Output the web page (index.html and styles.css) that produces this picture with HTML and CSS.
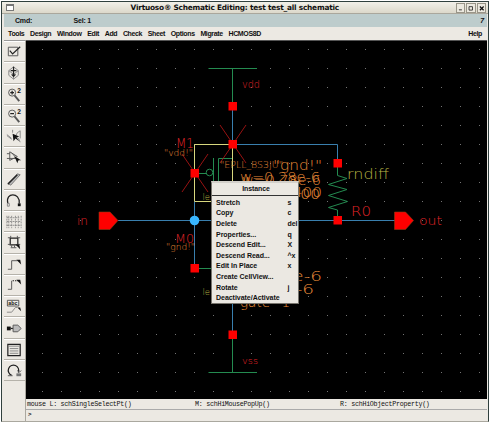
FILE: index.html
```html
<!DOCTYPE html>
<html lang="en">
<head>
<meta charset="utf-8">
<title>Virtuoso Schematic Editing</title>
<link rel="stylesheet" href="styles.css">
</head>
<body>
<div class="window">
  <header class="titlebar">
    <i class="sys"></i>
    <h1>Virtuoso® Schematic Editing: test test_all schematic</h1>
    <div class="controls">
      <svg viewBox="0 0 10 10"><path d="M2.5 7h4v1h-4z"/></svg>
      <svg viewBox="0 0 10 10"><path d="M2.7 3.2h4.6v4.6H2.7z" class="outline"/></svg>
      <svg viewBox="0 0 10 10"><path d="M2.5 3l5 5m0-5l-5 5" class="outline thick"/></svg>
    </div>
  </header>
  <div class="status"><span class="cmd">Cmd:</span><span>Sel: 1</span><span class="count">7</span></div>
  <nav class="menubar">
    <span>Tools</span><span>Design</span><span>Window</span><span>Edit</span><span>Add</span><span>Check</span><span>Sheet</span><span>Options</span><span>Migrate</span><span>HCMOS8D</span><span class="help">Help</span>
  </nav>
  <div class="main">
    <aside class="tools">
      <div><svg viewBox="0 0 22 20"><path d="M4.500 5.500h10v9h-10z"/><path d="M6 9l3 3.500L17 5" class="b"/></svg></div>
      <div><svg viewBox="0 0 22 20"><path d="M5 8l5-4 5 4-5 4zM5 8v5l5 4 5-4V8M10 12v5" class="g"/><path d="M10 4v10M7 8h6M8 12l2 2 2-2" class="b"/></svg></div>
      <div><svg viewBox="0 0 22 20"><circle cx="8.500" cy="8" r="3.700"/><path d="M6.500 8h4m-2-2v4" class="b"/><path d="M11 11l5 6" class="t"/><text x="14" y="8">2</text></svg></div>
      <div><svg viewBox="0 0 22 20"><circle cx="8.500" cy="8" r="3.700"/><path d="M6.500 8h4" class="b"/><path d="M11 11l5 6" class="t"/><text x="14" y="8">2</text></svg></div>
      <div><svg viewBox="0 0 22 20"><path d="M9 3v3M11 12l3-6 3-2v8" class="g"/><path d="M3 8l5 4m3-3l5 4M3 9l5 4M15 12l2 4" class="g"/><path d="M9 7l1 8 2-3 4 3-3-4 3-1z" class="f"/></svg></div>
      <div><svg viewBox="0 0 22 20"><path d="M6 4v9l8-4zM3 6h3m-3 5h12M8 5l7 8"/><path d="M11 9l3 7 1-3 3 0z" class="f"/></svg></div>
      <div><svg viewBox="0 0 22 20"><path d="M4 14l10-10 3 1L7 16z" class="fill thin"/><path d="M4 15L14 5" class="b"/></svg></div>
      <div><svg viewBox="0 0 22 20"><path d="M4 13C1 1 17 1 16 13" class="b"/><path d="M3.500 13h2v3h-2z" class="g"/><path d="M14.500 13h3v3h-3z" class="f"/></svg></div>
      <div><svg viewBox="0 0 22 20"><path d="M3 4v13M5 4v13M8 4v13M12 4v13M15 4v13M18 4v13M3 6h13M3 10h15M3 14h15" class="dash"/></svg></div>
      <div><svg viewBox="0 0 22 20"><path d="M6.500 5.500h8v7h-8z" class="b"/><path d="M4 5h3m-3 7h3m7-7h3m-3 7h3M7 15.500h6M7 3v2m7-2v2M8 13v2m3-2v2"/><path d="M12 12l5 5-1-5z" class="f"/></svg></div>
      <div><svg viewBox="0 0 22 20"><path d="M4 15h4V6h6"/><path d="M13 5l5 5-1-5z" class="f"/></svg></div>
      <div><svg viewBox="0 0 22 20"><path d="M4 14h4V5"/><path d="M9 5h6" class="b dot"/><path d="M13 4l5 5-1-5z" class="f"/></svg></div>
      <div><svg viewBox="0 0 22 20"><path d="M3.500 3.500h12v6h-12z"/><text x="4.500" y="8.800" class="abc">abc</text><path d="M3 16h5l4-5h2" class="g"/><path d="M14 11l4 4-1-4z" class="f"/></svg></div>
      <div><svg viewBox="0 0 22 20"><path d="M3 9h4v4H3z" class="f"/><path d="M7 11h3" class="b"/><path d="M9.500 7.500h5L18 11l-3.500 3.500h-5z" class="fill"/></svg></div>
      <div><svg viewBox="0 0 22 20"><path d="M4 4.500h13v12H4z" class="b"/><path d="M5 6.500h11M6 9h9m-9 2.500h9M6 14h9" class="g"/></svg></div>
      <div><svg viewBox="0 0 22 20"><path d="M8 15a5.500 5.500 0 1 1 7-3" class="b"/><path d="M4 15.500h5M14 10l2 2 2-2"/><path d="M13 13h5v3h-5z" class="gf"/></svg></div>
    </aside>
    <div class="work">
      <svg class="canvas" viewBox="26 41 461 358" role="img" aria-label="Schematic">
        <defs><pattern id="grid" x="42" y="49" width="19" height="19" patternUnits="userSpaceOnUse"><rect width="1" height="1" fill="#747474"/></pattern></defs>
        <rect x="26" y="41" width="461" height="358" fill="#000"/>
        <rect x="26" y="41" width="461" height="358" fill="url(#grid)"/>
        <g class="wire">
          <path d="M232.500 106V144.500H337.500V164M118 220.500H400M194.500 202V268M232.500 300V334"/>
        </g>
        <g class="device">
          <path d="M208.500 68.500H257M232.500 69V106M232.500 334V372.500M208.500 372.500H257"/>
          <path d="M337.500 164V175.500L347 178.500 328.500 184.500 347 189.500 328.500 195.500 347.500 201.500 328.500 207.500 337.500 210V220"/>
          <path d="M194 173.500H206M213.500 158V182M218.500 182V158.500H232M194 268.500H213"/>
          <circle cx="209.500" cy="172.500" r="3.300"/>
        </g>
        <g class="select"><path d="M194.500 201V144.500H232.500V182M194.500 201.500H213"/></g>
        <g class="cross"><path d="M220 125L246 163M246 125L220 163M182 154L208 192M208 154L182 192"/></g>
        <g class="pin">
          <path d="M228.500 102h8.500v8.500h-8.500zM228.500 140h8.500v8.500h-8.500zM190.500 169h8.500v8.500h-8.500zM190.500 264h8.500v8.500h-8.500zM333.500 159h8.500v8.500h-8.500zM333.500 216h8.500v8.500h-8.500zM228.500 330.500h8.500v8.500h-8.500z"/>
          <path d="M99 212h11l8 8.500-8 9H99zM394.500 212h11l8 8.500-8 9h-11z" class="port"/>
        </g>
        <circle cx="194.500" cy="220.500" r="4.800" fill="#38b6ff"/>
        <g class="label red">
          <text x="242" y="88" font-size="10.500" textLength="18" lengthAdjust="spacingAndGlyphs">vdd</text>
          <text x="242" y="363.500" font-size="9.500" textLength="16" lengthAdjust="spacingAndGlyphs">vss</text>
          <text x="77" y="225" font-size="12" textLength="11" lengthAdjust="spacingAndGlyphs">in</text>
          <text x="419" y="225" font-size="12" textLength="23" lengthAdjust="spacingAndGlyphs">out</text>
          <text x="176" y="148" font-size="13.500" textLength="18" lengthAdjust="spacingAndGlyphs">M1</text>
          <text x="175" y="243" font-size="13" textLength="19" lengthAdjust="spacingAndGlyphs">M0</text>
          <text x="351" y="216" font-size="14" textLength="20" lengthAdjust="spacingAndGlyphs">R0</text>
        </g>
        <g class="label orange">
          <text x="164" y="156" font-size="8.500" textLength="29" lengthAdjust="spacingAndGlyphs">"vdd!"</text>
          <text x="166" y="250" font-size="8.500" textLength="29" lengthAdjust="spacingAndGlyphs">"gnd!"</text>
          <text x="220" y="168" font-size="9.500" textLength="63" lengthAdjust="spacingAndGlyphs">"EPLL_BS3JU"</text>
          <text x="273" y="170" font-size="14" textLength="49" lengthAdjust="spacingAndGlyphs">"gnd!"</text>
          <text x="240" y="182" font-size="13.500" textLength="80" lengthAdjust="spacingAndGlyphs">w=0.28e-6</text>
          <text x="242" y="185" font-size="13.500" textLength="79" lengthAdjust="spacingAndGlyphs">w=0.78e-6</text>
          <text x="283" y="197" font-size="13.500" textLength="39" lengthAdjust="spacingAndGlyphs">1400</text>
          <text x="281" y="199" font-size="13.500" textLength="39" lengthAdjust="spacingAndGlyphs">e700</text>
          <text x="263" y="281" font-size="14" textLength="59" lengthAdjust="spacingAndGlyphs">0.8e-6</text>
          <text x="255" y="294" font-size="14" textLength="59" lengthAdjust="spacingAndGlyphs">0.5e-6</text>
          <text x="240" y="307" font-size="13.500" textLength="50" lengthAdjust="spacingAndGlyphs">gate=1</text>
        </g>
        <g class="label olive">
          <text x="347" y="178.500" font-size="14" textLength="42" lengthAdjust="spacingAndGlyphs">rndiff</text>
          <text x="202.500" y="199.500" font-size="8.500">le</text>
          <text x="202.500" y="295" font-size="8.500">le</text>
        </g>
      </svg>
      <div class="hints"><span class="left">mouse L: schSingleSelectPt()</span><span class="mid">M: schHiMousePopUp()</span><span>R: schHiObjectProperty()</span></div>
      <div class="prompt">&gt;</div>
      <div class="popup">
        <h2>Instance</h2>
        <ul>
          <li><span>Stretch</span><kbd>s</kbd></li>
          <li><span>Copy</span><kbd>c</kbd></li>
          <li><span>Delete</span><kbd>del</kbd></li>
          <li><span>Properties...</span><kbd>q</kbd></li>
          <li><span>Descend Edit...</span><kbd>X</kbd></li>
          <li><span>Descend Read...</span><kbd>^x</kbd></li>
          <li><span>Edit In Place</span><kbd>x</kbd></li>
          <li><span>Create CellView...</span></li>
          <li><span>Rotate</span><kbd>j</kbd></li>
          <li><span>Deactivate/Activate</span></li>
        </ul>
      </div>
    </div>
  </div>
</div>
</body>
</html>
```
FILE: styles.css
```css
* { box-sizing: border-box; }
body {
  margin: 0;
  width: 491px;
  height: 424px;
  padding: 1px 2px 2px 1px;
  background: #fff;
  overflow: hidden;
  color: #111;
  font: bold 7px/1 "Liberation Sans", sans-serif;
}
.window {
  display: flex;
  flex-direction: column;
  height: 421px;
  border: 1px solid #30403e;
  border-bottom-color: #aaa89f;
  background: #ece9e3;
  padding: 0 1px 0 2px;
}
.titlebar {
  display: flex;
  align-items: center;
  height: 12px;
  margin: 0 -1px 0 -2px;
  padding: 0 2px 0 4px;
  background: linear-gradient(#f2f0e9, #dcd8ca);
  border-bottom: 1px solid #aaa79c;
}
.sys { width: 8px; height: 7px; border: 1px solid #777; border-top-width: 2px; background: #fff; }
h1 { flex: 1; margin: 0; text-align: center; font: bold 7.4px/10px "DejaVu Sans", sans-serif; letter-spacing: -.22px; white-space: nowrap; }
.controls { display: flex; gap: 1px; }
.controls svg { width: 9.500px; height: 10px; border: 1px solid #999588; background: #ece9df; }
.outline { fill: none; stroke: #111; }
.thick { stroke-width: 1.600; }
.status { display: flex; align-items: center; height: 13px; padding: 0 3px 1px 11px; background: #bdcccc; letter-spacing: -.2px; }
.cmd { width: 58.500px; }
.count { margin-left: auto; font-style: italic; }
.menubar { display: flex; align-items: center; gap: 5.700px; height: 13px; padding: 0 5px 0 4px; letter-spacing: -.36px; white-space: nowrap; }
.help { margin-left: auto; }
.main { display: flex; flex: 1; min-height: 0; }
.tools { width: 22px; border-top: 1px solid #999; border-right: 1px solid #aaa79f; }
.tools div { height: 21.250px; border-bottom: 1px solid #b5b2aa; border-top: 1px solid #fff; }
.tools svg { display: block; width: 21px; height: 19px; fill: none; stroke: #555; }
.tools .b { stroke: #222; stroke-width: 1.300; }
.tools .t { stroke: #555; stroke-width: 2; }
.tools .g { stroke: #888; }
.tools .f { fill: #111; stroke: none; }
.tools .gf { fill: #777; stroke: none; }
.tools .fill { fill: #bbb; }
.tools .thin { stroke-width: .7; }
.tools .dot { stroke-dasharray: 1.500 1; }
.tools .dash { stroke-dasharray: 2 1; stroke: #777; stroke-width: .8; }
.tools text { fill: #111; stroke: none; font-size: 7px; }
.tools .abc { font-size: 5.500px; }
.work { position: relative; display: flex; flex-direction: column; flex: 1; border-top: 1px solid #555; }
.canvas { display: block; flex: none; width: 461px; height: 358px; }
.wire path { fill: none; stroke: #397fae; }
.device path, .device circle { fill: none; stroke: #248b50; }
.select path { fill: none; stroke: #d7d77e; }
.cross path { stroke: #a81414; stroke-width: .9; }
.pin path { fill: #fe0000; }
.pin .port { stroke: #8a3a12; stroke-width: .6; }
.label { font-family: "DejaVu Sans", sans-serif; font-weight: 200; }
.red { fill: #e02428; }
.orange { fill: #e98b38; }
.olive { fill: #b9b544; }
.hints { display: flex; align-items: center; height: 11px; padding-top: 1px; border-bottom: 1px solid #aaa; font: 6.700px/9px "Liberation Mono", monospace; letter-spacing: -.28px; white-space: pre; }
.left { width: 169px; padding-left: 1px; }
.mid { width: 145px; }
.prompt { padding: 1px 2px; font: bold 6px/8px "Liberation Mono", monospace; }
.popup { position: absolute; left: 185px; top: 140px; width: 88px; height: 123px; background: #ebe8e2; border: 1px solid #77746d; border-top: 2px solid #d3d0ca; }
h2 { height: 13px; margin: 0; padding-left: 2px; border-bottom: 1px solid #333; text-align: center; font-size: 7px; line-height: 12px; letter-spacing: -.1px; }
ul { margin: 0; padding: 1px 0 0 4px; list-style: none; }
li { display: flex; height: 10.600px; align-items: center; white-space: nowrap; letter-spacing: -.03px; }
li span { width: 71.500px; }
kbd { font: inherit; }
```
